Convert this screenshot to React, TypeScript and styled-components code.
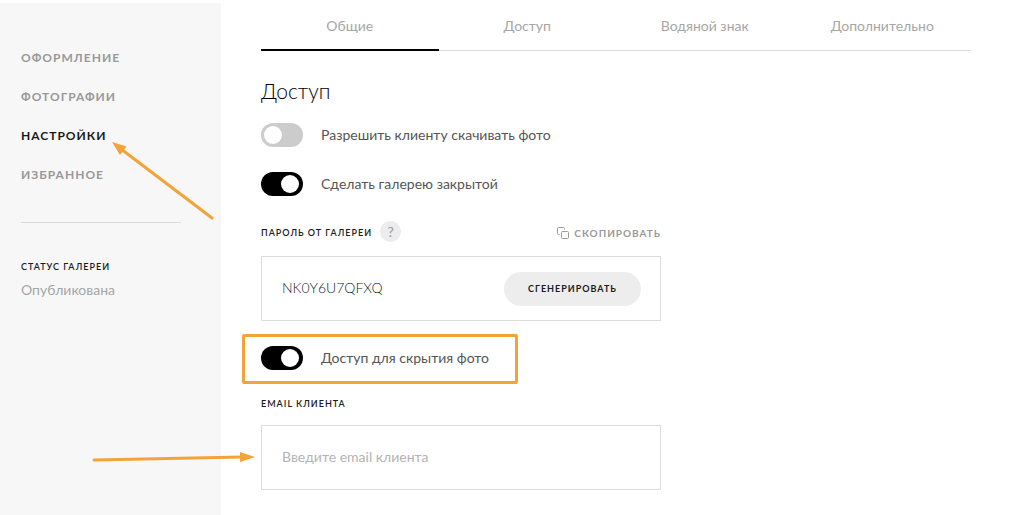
import React, { useState } from "react";
import styled, { createGlobalStyle } from "styled-components";

const GlobalStyle = createGlobalStyle`
  *, *::before, *::after { box-sizing: border-box; }
  body {
    margin: 0;
    background: #fff;
    color: #555;
    font: 400 14px/20px Lato, "Open Sans", sans-serif;
  }
  button, input { font: inherit; color: inherit; }
  button { padding: 0; border: 0; background: none; cursor: pointer; }
`;

const accent = "#f2a33a";

const Page = styled.div`
  display: flex;
  min-height: 100vh;
  padding-top: 3px;
`;

const Sidebar = styled.aside`
  flex: 0 0 221px;
  padding: 45px 40px 0 21px;
  background: #f7f7f7;
`;

const Nav = styled.nav`
  display: flex;
  flex-direction: column;
  align-items: flex-start;
  gap: 19px;
  padding-bottom: 37px;
  border-bottom: 1px solid #dcdcdc;
`;

const NavLink = styled.a<{ $active?: boolean }>`
  position: relative;
  color: ${(p) => (p.$active ? "#1a1a1a" : "#999")};
  font-size: 12px;
  font-weight: 700;
  letter-spacing: 1px;
  text-decoration: none;
  text-transform: uppercase;
`;

const Status = styled.div`
  display: flex;
  flex-direction: column;
  gap: 3px;
  padding-top: 34px;
  color: #a6a6a6;
`;

const Caption = styled.span`
  color: #1a1a1a;
  font-size: 9px;
  font-weight: 600;
  letter-spacing: 1px;
  text-transform: uppercase;
`;

const Main = styled.main`
  flex: 1;
  min-width: 0;
  padding: 0 39px 25px 40px;
`;

const Tabs = styled.div`
  display: flex;
  border-bottom: 1px solid #dcdcdc;
`;

const Tab = styled.button<{ $active: boolean }>`
  flex: 1 1 0;
  height: 48px;
  margin-bottom: -1px;
  border-bottom: 2px solid ${(p) => (p.$active ? "#000" : "transparent")};
  color: #a6a6a6;
`;

const Form = styled.form`
  max-width: 400px;
`;

const Title = styled.h1`
  margin: 24px 0 16px;
  color: #000;
  font-size: 21px;
  font-weight: 300;
  line-height: 32px;
`;

const Switches = styled.div`
  display: flex;
  flex-direction: column;
  gap: 25px;
`;

const SwitchRow = styled.label`
  position: relative;
  display: inline-flex;
  align-items: center;
  align-self: flex-start;
  gap: 18px;
  cursor: pointer;
`;

const SwitchInput = styled.input`
  appearance: none;
  width: 42px;
  height: 24px;
  margin: 0;
  padding: 3px;
  border-radius: 12px;
  background: #ccc;
  cursor: pointer;

  &::before {
    content: "";
    display: block;
    width: 18px;
    height: 18px;
    border-radius: 50%;
    background: #fff;
  }
  &:checked { background: #000; }
  &:checked::before { margin-left: 17px; }
`;

const Highlight = styled.span`
  position: absolute;
  inset: -12px -29px -14px -19px;
  border: 3px solid ${accent};
  border-radius: 2px;
  pointer-events: none;
`;

const FieldHead = styled.div`
  display: flex;
  align-items: center;
  gap: 8px;
  margin: 25px 0 14px;
`;

const HeadLabel = styled.label`
  padding-top: 3px;
  color: #1a1a1a;
  font-size: 9px;
  font-weight: 600;
  letter-spacing: 1px;
  line-height: 18px;
  text-transform: uppercase;
`;

const Help = styled.button`
  width: 21px;
  height: 21px;
  border-radius: 50%;
  background: #ececec;
  color: #999;
`;

const Copy = styled.button`
  display: flex;
  align-items: center;
  gap: 5px;
  margin-left: auto;
  padding-top: 3px;
  color: #999;
  font-size: 10px;
  font-weight: 700;
  letter-spacing: 1px;
  line-height: 18px;
  text-transform: uppercase;
`;

const Field = styled.div`
  position: relative;
  display: flex;
  align-items: center;
  height: 65px;
  padding: 0 19px 0 20px;
  border: 1px solid #dcdcdc;
`;

const TextInput = styled.input`
  flex: 1;
  min-width: 0;
  padding: 0 0 2px;
  border: 0;
  outline: 0;
  background: none;
  &::placeholder { color: #b4b4b4; opacity: 1; }
`;

const PasswordInput = styled(TextInput)`
  color: #222;
  font-weight: 300;
`;

const Generate = styled.button`
  width: 137px;
  height: 34px;
  border-radius: 17px;
  background: #ededed;
  color: #1a1a1a;
  font-size: 9px;
  font-weight: 700;
  letter-spacing: 1px;
  text-transform: uppercase;
`;

const AccessRow = styled.div`
  display: flex;
  margin-top: 25px;
`;

const EmailHead = styled.div`
  display: flex;
  margin: 24px 0 11px;
`;

const NavArrow = styled.svg`
  position: absolute;
  top: 4px;
  left: 90px;
  pointer-events: none;
`;

const FieldArrow = styled.svg`
  position: absolute;
  top: 24px;
  right: 100%;
  margin-right: 6px;
  pointer-events: none;
`;

const navItems = ["Оформление", "Фотографии", "Настройки", "Избранное"];
const tabItems = ["Общие", "Доступ", "Водяной знак", "Дополнительно"];

function CopyIcon() {
  return (
    <svg width="12" height="12" viewBox="0 0 12 12" fill="none" stroke="#999" aria-hidden="true">
      <rect x="4.5" y="4.5" width="7" height="7" rx="1" />
      <path d="M2.5 7.5h-1a1 1 0 0 1-1-1v-5a1 1 0 0 1 1-1h5a1 1 0 0 1 1 1v1" />
    </svg>
  );
}

export default function App() {
  const [tab, setTab] = useState(0);
  return (
    <>
      <GlobalStyle />
      <Page>
        <Sidebar>
          <Nav>
            {navItems.map((item) => (
              <NavLink key={item} href="#" $active={item === "Настройки"}>
                {item}
                {item === "Настройки" && (
                  <NavArrow width="104" height="90" viewBox="0 0 104 90" aria-hidden="true">
                    <path d="M10 19 101 88" stroke={accent} strokeWidth="3" strokeLinecap="round" />
                    <path d="M1 12 15.5 16.5 9 25Z" fill={accent} />
                  </NavArrow>
                )}
              </NavLink>
            ))}
          </Nav>
          <Status>
            <Caption>Статус галереи</Caption>
            <span>Опубликована</span>
          </Status>
        </Sidebar>
        <Main>
          <Tabs role="tablist">
            {tabItems.map((item, i) => (
              <Tab key={item} role="tab" aria-selected={tab === i} $active={tab === i} onClick={() => setTab(i)}>
                {item}
              </Tab>
            ))}
          </Tabs>
          <Form onSubmit={(e) => e.preventDefault()}>
            <Title>Доступ</Title>
            <Switches>
              <SwitchRow>
                <SwitchInput type="checkbox" role="switch" />
                Разрешить клиенту скачивать фото
              </SwitchRow>
              <SwitchRow>
                <SwitchInput type="checkbox" role="switch" defaultChecked />
                Сделать галерею закрытой
              </SwitchRow>
            </Switches>
            <FieldHead>
              <HeadLabel htmlFor="password">Пароль от галереи</HeadLabel>
              <Help type="button">?</Help>
              <Copy type="button">
                <CopyIcon />
                Скопировать
              </Copy>
            </FieldHead>
            <Field>
              <PasswordInput id="password" defaultValue="NK0Y6U7QFXQ" />
              <Generate type="button">Сгенерировать</Generate>
            </Field>
            <AccessRow>
              <SwitchRow>
                <SwitchInput type="checkbox" role="switch" defaultChecked />
                Доступ для скрытия фото
                <Highlight />
              </SwitchRow>
            </AccessRow>
            <EmailHead>
              <Caption as="label" htmlFor="email">Email клиента</Caption>
            </EmailHead>
            <Field>
              <TextInput id="email" type="email" placeholder="Введите email клиента" />
              <FieldArrow width="164" height="14" viewBox="0 0 164 14" aria-hidden="true">
                <path d="M2 10 150 7" stroke={accent} strokeWidth="3" strokeLinecap="round" />
                <path d="M148 2 163 7 148 12Z" fill={accent} />
              </FieldArrow>
            </Field>
          </Form>
        </Main>
      </Page>
    </>
  );
}
